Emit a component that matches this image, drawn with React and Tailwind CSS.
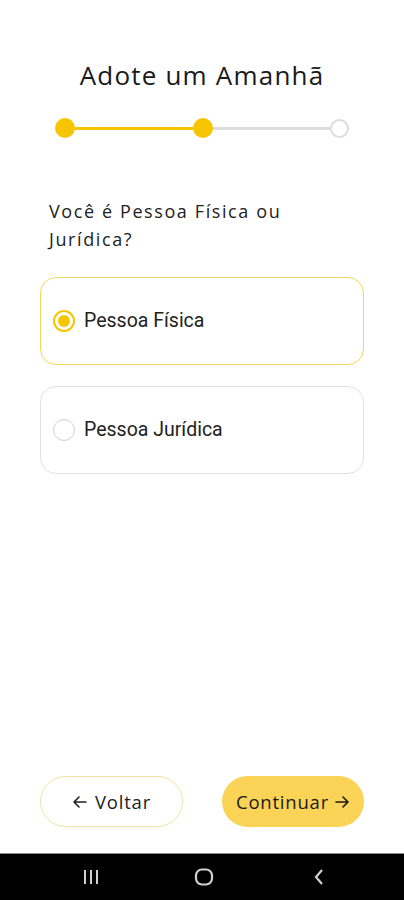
import React, { useState } from 'react'

const options = ['Pessoa Física', 'Pessoa Jurídica']

function Arrow({ dir }){
  return (
    <svg width="15" height="14" viewBox="0 0 15 14" className="shrink-0">
      {dir === 'left' ? (
        <path d="M14 7 H2 M7 2 L2 7 L7 12" fill="none" stroke="currentColor" strokeWidth="1.6" strokeLinecap="round" strokeLinejoin="round" />
      ) : (
        <path d="M1 7 H13 M8 2 L13 7 L8 12" fill="none" stroke="currentColor" strokeWidth="1.6" strokeLinecap="round" strokeLinejoin="round" />
      )}
    </svg>
  )
}

export default function App(){
  const [selected, setSelected] = useState(0)

  return (
    <div className="h-[900px] w-full bg-white flex flex-col font-['Open_Sans',sans-serif] text-[#1f1f1f]">
      <div className="flex-1 flex flex-col">
        {/* Header */}
        <h1 className="mt-[58px] text-center text-[26px] leading-[34px] tracking-[1.2px] text-[#1a1a1a]">
          Adote um Amanhã
        </h1>

        {/* Stepper */}
        <div className="mt-[26px] mx-[55px] h-[20px] flex items-center">
          <div className="w-[20px] h-[20px] rounded-full bg-[#F6C500] shrink-0" />
          <div className="flex-1 h-[3px] bg-[#F6C500]" />
          <div className="w-[20px] h-[20px] rounded-full bg-[#F6C500] shrink-0" />
          <div className="flex-1 h-[3px] bg-[#dcdcdc]" />
          <div className="w-[19px] h-[19px] rounded-full border-2 border-[#dcdcdc] bg-white shrink-0" />
        </div>

        {/* Question */}
        <p className="mt-[59px] ml-[49px] pr-[20px] text-[18px] leading-[28px] tracking-[1.6px] text-[#222]">
          Você é Pessoa Física ou<br />Jurídica?
        </p>

        <div className="mt-[24px] mx-[40px] flex flex-col gap-[21px]">
          {options.map((o, i) => {
            const active = selected === i
            return (
              <button
                key={o}
                onClick={() => setSelected(i)}
                className={`h-[88px] w-full rounded-[16px] border-[1.5px] bg-white text-left flex items-center px-[12px] gap-[9px] ${active ? 'border-[#F3D65A]' : 'border-[#e2e2e2]'}`}
              >
                {active ? (
                  <span className="w-[22px] h-[22px] rounded-full border-2 border-[#F6C500] flex items-center justify-center shrink-0">
                    <span className="w-[12px] h-[12px] rounded-full bg-[#F6C500]" />
                  </span>
                ) : (
                  <span className="w-[22px] h-[22px] rounded-full border-[1.5px] border-[#cfcfcf] shrink-0" />
                )}
                <span className="font-['Roboto',sans-serif] text-[19.5px] text-[#222]">{o}</span>
              </button>
            )
          })}
        </div>
      </div>

      {/* Footer buttons */}
      <div className="px-[40px] pb-[26px] flex justify-between">
        <button className="w-[143px] h-[51px] rounded-full border border-[#F3E3A3] bg-white flex items-center justify-center gap-[8px] text-[18.5px] tracking-[0.8px] text-[#222]">
          <Arrow dir="left" /> Voltar
        </button>
        <button className="w-[142px] h-[51px] rounded-full bg-[#FBD356] flex items-center justify-center gap-[6px] text-[18.5px] tracking-[0.8px] text-[#1a1a1a]">
          Continuar <Arrow dir="right" />
        </button>
      </div>

      {/* Android nav bar */}
      <div className="h-[47px] bg-black border-t border-[#8a8a8a] flex items-center">
        <div className="w-[182px] flex justify-end pr-[82px]">
          <svg width="18" height="16" viewBox="0 0 18 16" className="text-[#d0d0d0]">
            <rect x="2" y="1" width="2" height="14" fill="currentColor" />
            <rect x="8" y="1" width="2" height="14" fill="currentColor" />
            <rect x="14" y="1" width="2" height="14" fill="currentColor" />
          </svg>
        </div>
        <div className="w-[44px] flex justify-center">
          <svg width="20" height="18" viewBox="0 0 20 18" className="text-[#d0d0d0]">
            <rect x="2" y="1.5" width="16" height="15" rx="6" fill="none" stroke="currentColor" strokeWidth="2.2" />
          </svg>
        </div>
        <div className="flex-1 flex justify-start pl-[86px]">
          <svg width="14" height="18" viewBox="0 0 14 18" className="text-[#d0d0d0]">
            <path d="M10 2 L4 9 L10 16" fill="none" stroke="currentColor" strokeWidth="2.2" />
          </svg>
        </div>
      </div>
    </div>
  )
}
